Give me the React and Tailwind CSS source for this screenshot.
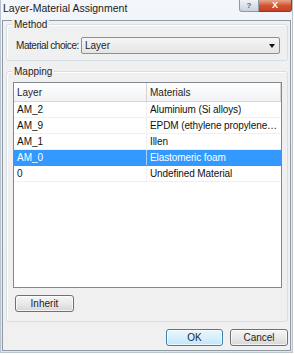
const rows = [
  { layer: 'AM_2', material: 'Aluminium (Si alloys)' },
  { layer: 'AM_9', material: 'EPDM (ethylene propylene diene monomer)' },
  { layer: 'AM_1', material: 'Illen' },
  { layer: 'AM_0', material: 'Elastomeric foam', selected: true },
  { layer: '0', material: 'Undefined Material' },
];

function WinButton({ children, primary, className = '' }) {
  return (
    <button
      className={`h-[17px] rounded-[3px] border text-[10px] leading-none text-[#1e1e1e] bg-gradient-to-b shadow-[inset_0_0_0_1px_rgba(255,255,255,0.7)] ${
        primary ? 'border-[#3c7fb1] from-[#eaf6fd] via-[#d9f0fc] to-[#bee6fd]' : 'border-[#707070] from-[#f5f5f5] via-[#e9e9e9] to-[#d6d6d6]'
      } ${className}`}
    >
      {children}
    </button>
  );
}

export default function App() {
  return (
    <div className="w-[295px] h-[355px] bg-white overflow-hidden" style={{ fontFamily: '"Liberation Sans", Arial, sans-serif' }}>
      <div className="w-[293px] h-[353px] flex flex-col bg-gradient-to-b from-[#f3f6fa] to-[#dfe6ee] border-l border-r border-b border-[#b9c4cf]">
        {/* title bar */}
        <div className="h-[20px] flex items-start justify-between shrink-0">
          <span className="pl-[2px] pt-[2px] text-[10.5px] leading-[12px] text-[#1a1a1a]">Layer-Material Assignment</span>
          <div className="flex">
            <div className="w-[20px] h-[12px] rounded-bl-[3px] border border-t-0 border-[#8d99a6] bg-gradient-to-b from-[#eef2f6] to-[#c9d3dc] flex items-center justify-center text-[8px] leading-none font-bold text-[#5e6a78]">?</div>
            <div className="w-[33px] h-[12px] rounded-br-[3px] border border-l-0 border-t-0 border-[#8c3b2a] bg-gradient-to-b from-[#e8a58c] via-[#d2552f] to-[#c2432a] flex items-center justify-center text-[9px] leading-none font-bold text-white">X</div>
          </div>
        </div>

        {/* client area */}
        <div className="flex-1 ml-[1px] mr-[1px] mb-[1px] bg-[#f0f0f0] border border-[#8f9aa5] flex flex-col pl-[3px] pr-[2px]">
          {/* Method group */}
          <div className="mt-[3px] border border-[#d5dfe5] rounded-[3px] shadow-[inset_1px_1px_0_#fff] pl-[9px] pr-[7px] pb-[6px] flex flex-col">
            <span className="mt-[-6px] ml-[-4px] w-fit px-[2px] bg-[#f0f0f0] text-[10px] leading-[12px] text-[#1e1e1e]">Method</span>
            <div className="mt-[6px] flex items-center">
              <span className="w-[65px] shrink-0 whitespace-nowrap text-[10px] tracking-[-0.45px] text-[#1e1e1e]">Material choice:</span>
              <div className="flex-1 h-[17px] rounded-[2px] border border-[#8e8f8f] bg-gradient-to-b from-[#f6f6f6] to-[#e4e4e4] flex items-center justify-between pl-[3px] pr-[4px]">
                <span className="text-[10px] text-[#1e1e1e]">Layer</span>
                <span className="w-0 h-0 border-l-[3.5px] border-r-[3.5px] border-t-[4px] border-l-transparent border-r-transparent border-t-[#111]" />
              </div>
            </div>
          </div>

          {/* Mapping group */}
          <div className="mt-[10px] border border-[#d5dfe5] rounded-[3px] shadow-[inset_1px_1px_0_#fff] pl-[6px] pr-[5px] pb-[9px] flex flex-col">
            <span className="mt-[-6px] ml-[-1px] w-fit px-[2px] bg-[#f0f0f0] text-[10px] leading-[12px] text-[#1e1e1e]">Mapping</span>
            <div className="mt-[4px] h-[206px] border border-[#828790] bg-white flex flex-col">
              <div className="h-[19px] shrink-0 flex border-b border-[#d5d5d5] bg-gradient-to-b from-[#ffffff] to-[#f1f2f4]">
                <div className="w-[133px] border-r border-[#d5d5d5] pl-[3px] flex items-center text-[10px] text-[#1e1e1e]">Layer</div>
                <div className="flex-1 border-r border-[#d5d5d5] pl-[3px] flex items-center text-[10px] text-[#1e1e1e]">Materials</div>
              </div>
              {rows.map((r) => (
                <div
                  key={r.layer}
                  className={`h-[16px] shrink-0 flex border-b ${r.selected ? 'bg-[#3399ff] text-white border-[#3399ff]' : 'text-[#111] border-[#f0f0f0]'}`}
                >
                  <div className={`w-[133px] border-r pl-[3px] flex items-center text-[10px] ${r.selected ? 'border-[#a8d0fa]' : 'border-[#f0f0f0]'}`}>{r.layer}</div>
                  <div className="flex-1 min-w-0 pl-[3px] pr-[2px] flex items-center text-[10px] tracking-[-0.1px]">
                    <span className="truncate">{r.material}</span>
                  </div>
                </div>
              ))}
            </div>
            <div className="mt-[7px] pl-[2px] flex">
              <WinButton className="w-[59px]">Inherit</WinButton>
            </div>
          </div>

          <div className="mt-[7px] flex justify-end gap-[7px]">
            <WinButton primary className="w-[57px]">OK</WinButton>
            <WinButton className="w-[58px]">Cancel</WinButton>
          </div>
        </div>
      </div>
    </div>
  );
}
